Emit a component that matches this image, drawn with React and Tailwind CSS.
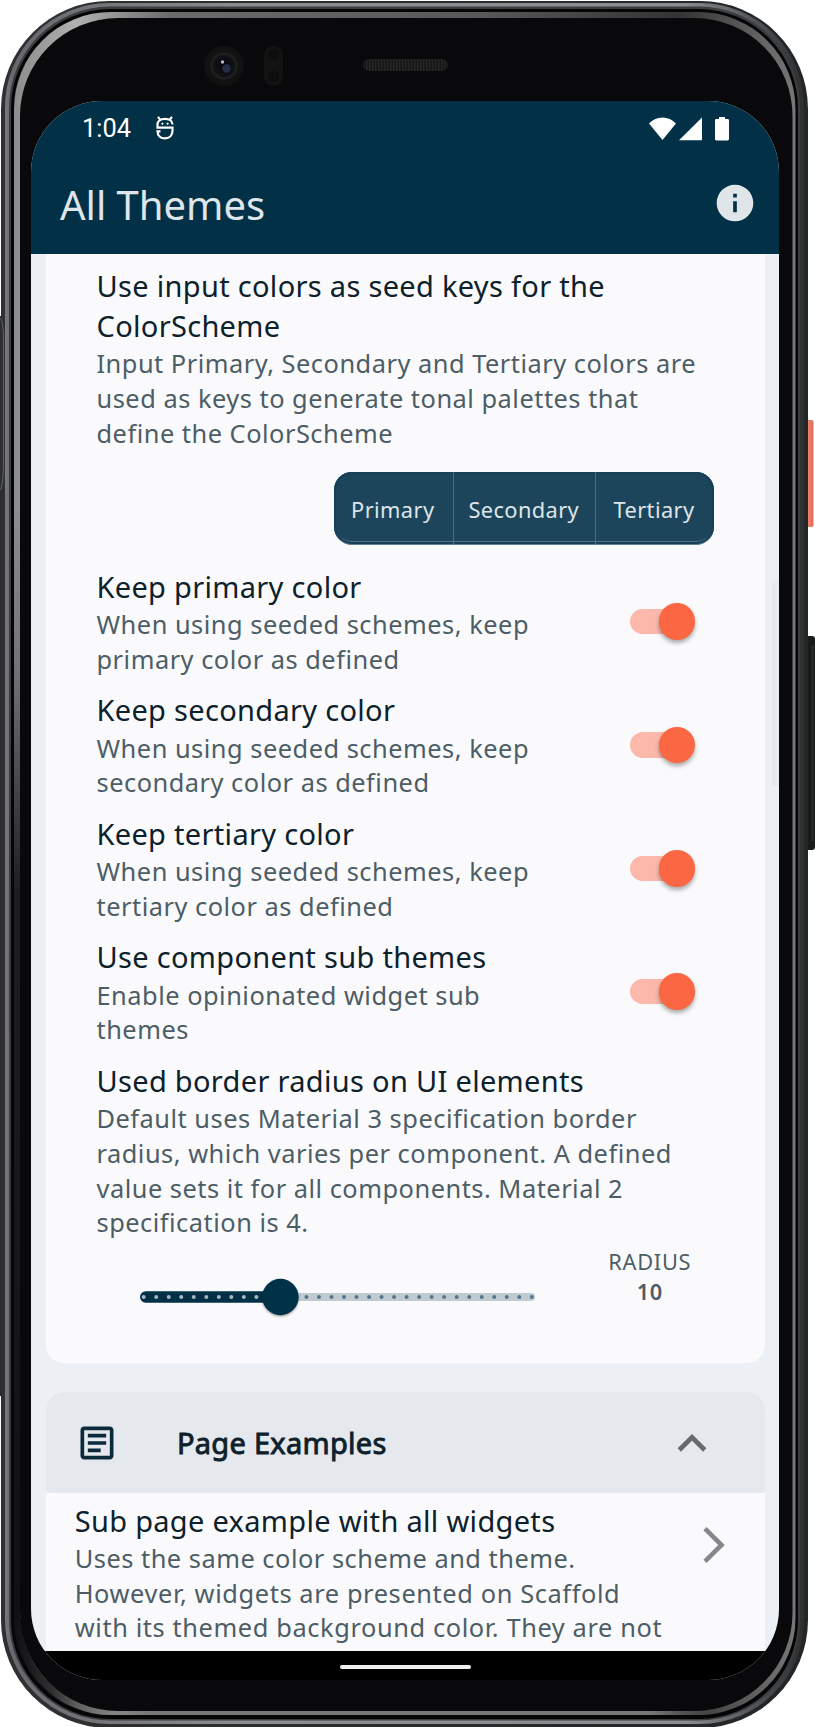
import { MdInfo, MdOutlineArticle } from "react-icons/md";

const titleCls = "text-[29px] leading-[39.6px] tracking-[0.31px] text-[#0d212b] whitespace-nowrap";
const subCls = "text-[25.4px] leading-[34.65px] text-[#4d5d66] whitespace-nowrap relative top-[0.9px]";

const switches = [
  { title: "Keep primary color", lines: ["When using seeded schemes, keep", "primary color as defined"] },
  { title: "Keep secondary color", lines: ["When using seeded schemes, keep", "secondary color as defined"] },
  { title: "Keep tertiary color", lines: ["When using seeded schemes, keep", "tertiary color as defined"] },
  { title: "Use component sub themes", lines: ["Enable opinionated widget sub", "themes"] },
];

function Lines({ lines, tracking = "tracking-[0.5px]" }) {
  return lines.map((l) => (
    <div key={l} className={`${subCls} ${tracking}`}>{l}</div>
  ));
}

function Switch() {
  return (
    <div className="mr-[68.6px] flex h-[36.5px] w-[66px] items-center rounded-full">
      <div className="flex h-[25.5px] w-[60px] items-center rounded-full bg-[#fbb8ab]">
        <div className="ml-[29px] h-[36.5px] w-[36.5px] shrink-0 rounded-full bg-[#fa6742] shadow-[0_3px_4px_rgba(0,0,0,0.32)]" />
      </div>
    </div>
  );
}

function Slider() {
  const ticks = Array.from({ length: 32 }, (_, i) => i);
  return (
    <svg width="396" height="44" viewBox="0 0 396 44" className="ml-[94.3px] block">
      <defs>
        <filter id="thumbShadow" x="-30%" y="-30%" width="160%" height="170%">
          <feDropShadow dx="0" dy="1.2" stdDeviation="1.2" floodOpacity="0.4" />
        </filter>
      </defs>
      <rect x="130" y="18" width="265" height="8" rx="4" fill="#c0cad1" />
      <rect x="0" y="16.3" width="140" height="11.4" rx="5.7" fill="#023047" />
      {ticks.map((i) => (
        <circle key={i} cx={3.7 + i * 12.52} cy="22" r="2" fill={i < 11 ? "#a9b7bf" : "#55768a"} />
      ))}
      <circle cx="140.4" cy="22" r="18.2" fill="#023047" filter="url(#thumbShadow)" />
    </svg>
  );
}

function PhoneBody() {
  return (
    <svg width="815" height="1727" viewBox="0 0 815 1727" className="absolute inset-0">
      <defs>
        <linearGradient id="outer" x1="0" x2="1" y1="0" y2="0">
          <stop offset="0" stopColor="#303030" /><stop offset="1" stopColor="#242526" />
        </linearGradient>
        <linearGradient id="rim" x1="0" x2="1" y1="0" y2="0">
          <stop offset="0" stopColor="#77797d" /><stop offset="0.01" stopColor="#66686d" />
          <stop offset="0.3" stopColor="#8b8e91" /><stop offset="0.85" stopColor="#8b8e91" /><stop offset="0.95" stopColor="#4a4d50" /><stop offset="1" stopColor="#2c2f30" />
        </linearGradient>
        <linearGradient id="bevel" x1="0" x2="1" y1="0" y2="0">
          <stop offset="0" stopColor="#8c8c8c" /><stop offset="0.08" stopColor="#b0b0b0" />
          <stop offset="0.2" stopColor="#6b6b6b" /><stop offset="0.6" stopColor="#585858" />
          <stop offset="0.85" stopColor="#333333" /><stop offset="1" stopColor="#777777" />
        </linearGradient>
        <linearGradient id="bevelFade" x1="0" x2="0" y1="0" y2="1">
          <stop offset="0" stopColor="#0a0a0c" stopOpacity="0" /><stop offset="0.15" stopColor="#0a0a0c" stopOpacity="0.2" />
          <stop offset="0.35" stopColor="#0a0a0c" stopOpacity="0.85" /><stop offset="1" stopColor="#0a0a0c" stopOpacity="0.95" />
        </linearGradient>
        <linearGradient id="cornerFade" gradientUnits="userSpaceOnUse" x1="14" x2="125" y1="0" y2="0">
          <stop offset="0" stopColor="#0a0a0c" stopOpacity="0.95" /><stop offset="0.35" stopColor="#0a0a0c" stopOpacity="0.75" />
          <stop offset="1" stopColor="#0a0a0c" stopOpacity="0" />
        </linearGradient>
        <linearGradient id="bottomEdge" x1="0" x2="1" y1="0" y2="0">
          <stop offset="0" stopColor="#777777" stopOpacity="0" /><stop offset="0.1" stopColor="#777777" />
          <stop offset="0.9" stopColor="#777777" /><stop offset="1" stopColor="#777777" stopOpacity="0" />
        </linearGradient>
        <linearGradient id="power" x1="0" x2="1" y1="0" y2="0">
          <stop offset="0" stopColor="#b5452f" /><stop offset="0.4" stopColor="#f08068" /><stop offset="1" stopColor="#d96d58" />
        </linearGradient>
        <radialGradient id="lens">
          <stop offset="0" stopColor="#07070a" /><stop offset="0.5" stopColor="#101016" />
          <stop offset="0.62" stopColor="#222222" /><stop offset="0.7" stopColor="#131313" /><stop offset="1" stopColor="#101010" />
        </radialGradient>
        <pattern id="mesh" width="3" height="3" patternUnits="userSpaceOnUse">
          <rect width="3" height="3" fill="#151515" /><rect width="1.4" height="3" fill="#272727" />
        </pattern>
      </defs>
      <rect x="805" y="420" width="8.5" height="107" rx="2" fill="url(#power)" />
      <rect x="805" y="636" width="10" height="214" rx="3" fill="#1a1a1a" />
      <rect x="811.5" y="645" width="2" height="196" fill="#2c2c2c" />
      <rect x="1" y="1" width="807" height="1727" rx="108" fill="url(#outer)" />
      <rect x="0" y="316" width="2" height="1080" fill="#2c2d2d" />
      <rect x="5" y="3" width="799" height="1721" rx="104" fill="url(#rim)" />
      <rect x="9" y="6.5" width="791" height="1714" rx="101" fill="#3c3d40" />
      <rect x="11" y="9" width="787" height="1710" rx="99" fill="#050505" />
      <rect x="14" y="12" width="781.5" height="1703" rx="97" fill="url(#bevel)" />
      <rect x="14" y="500" width="6" height="1118" fill="url(#bevelFade)" />
      <path d="M17 1618 A97 95 0 0 0 114 1713 H126" fill="none" stroke="url(#cornerFade)" strokeWidth="9" />
      <rect x="100" y="1710.500" width="610" height="4.500" fill="url(#bottomEdge)" />
      <rect x="20" y="18" width="772.5" height="1693" rx="98" fill="#09090b" />
      <path d="M0.500 318 Q3.500 324 3.500 340 V462 Q3.500 482 0.500 490" fill="none" stroke="#5a6262" strokeWidth="1" />
      <circle cx="224" cy="66" r="20" fill="url(#lens)" />
      <circle cx="226.5" cy="68.5" r="4.2" fill="#38456e" opacity="0.6" />
      <circle cx="222.5" cy="62" r="1.7" fill="#b9b9b9" />
      <rect x="264" y="46" width="19" height="40" rx="9.5" fill="#131313" />
      <circle cx="273.5" cy="54.5" r="6.5" fill="#0d0d0e" stroke="#161616" />
      <circle cx="273.5" cy="76.5" r="6.5" fill="#0d0d0e" stroke="#161616" />
      <rect x="363.5" y="59.5" width="84" height="11" rx="5.5" fill="url(#mesh)" stroke="#1e1e1e" />
    </svg>
  );
}

function StatusBar() {
  return (
    <div className="flex h-[54px] items-center justify-between pl-[51px] pr-[50.500px]">
      <div className="flex items-center">
        <span className="font-['Roboto'] text-[25.4px] leading-[30px] text-white">1:04</span>
        <svg width="18" height="24" viewBox="0 0 18 24" className="ml-[25.300px]" fill="none" stroke="white" strokeWidth="2.200">
          <path d="M2 0.800 L4 3.400 M16 0.800 L14 3.400" />
          <path d="M16.500 8.500 C16.500 4.500 13 2.800 9 2.800 C4.500 2.800 1.500 5 1.500 8.500 V11.600 H16.500 V14.500 C16.500 19.500 13.500 22.400 9 22.400 C4.500 22.400 1.500 19.500 1.500 15.300 H4.500" />
          <circle cx="6.400" cy="7.700" r="0.700" fill="white" strokeWidth="0.900" />
          <circle cx="11.600" cy="7.700" r="0.700" fill="white" strokeWidth="0.900" />
        </svg>
      </div>
      <svg width="81" height="25" viewBox="0 0 81 25" fill="white">
        <path d="M1 7.500 C8 -0.500 21 -0.500 28 7.500 L14.500 24 Z" />
        <path d="M54 1.500 V24.200 H31 Z" />
        <path d="M71 1 h6 v2 h2.600 q1.400 0 1.400 1.400 v18.700 q0 1.400 -1.400 1.400 h-11.200 q-1.400 0 -1.400 -1.400 v-18.700 q0 -1.400 1.400 -1.400 h2.600 z" />
      </svg>
    </div>
  );
}

export default function App() {
  return (
    <div className="relative h-[1727px] w-[815px] overflow-hidden bg-white pt-[101px] pl-[31px] font-['Noto_Sans',sans-serif]">
      <PhoneBody />
      <div className="relative flex h-[1578.5px] w-[748px] flex-col overflow-hidden rounded-[71px] bg-[#ecf0f5]">
        <header className="h-[153px] shrink-0 bg-[#023047]">
          <StatusBar />
          <div className="flex h-[99px] items-center justify-between pl-[29px] pr-[22px]">
            <h1 className="text-[40px] leading-[54px] text-[#dfe5e8]">All Themes</h1>
            <MdInfo size={44} className="-mt-[3px] text-[#dfe5e8]" />
          </div>
        </header>

        <main className="relative h-[1396.700px] shrink-0 overflow-hidden px-[14.500px]">
          <div className="absolute top-[326px] right-0 h-[206px] w-[7px] bg-[#e6e9ee]" />
          <section className="h-[1108.500px] rounded-b-[18px] bg-[#fafafd] pt-[11.500px] pl-[51px]">
            <div className="text-[29px] leading-[40px] tracking-[0.310px] text-[#0d212b]">
              <div>Use input colors as seed keys for the</div>
              <div>ColorScheme</div>
            </div>
            <Lines lines={["Input Primary, Secondary and Tertiary colors are", "used as keys to generate tonal palettes that", "define the ColorScheme"]} />
            <div className="mt-[22.200px] ml-[237.500px] flex h-[73px] w-[380px] overflow-hidden rounded-[18px] border-b border-[#5d7f92] bg-[#1c455b] text-[21.800px] leading-[30px] tracking-[0.400px] text-[#dfe5e8] shadow-[inset_0_0_0_2px_#164058,inset_0_-3px_0_#527386]">
              <div className="flex w-[120px] items-center justify-center border-r border-[#4b6d80] pt-[4.500px] pr-[1.500px]">Primary</div>
              <div className="flex w-[142px] items-center justify-center border-r border-[#4b6d80] pt-[4.500px] pr-[1.500px]">Secondary</div>
              <div className="flex w-[118px] items-center justify-center pt-[4.500px] pr-[2px]">Tertiary</div>
            </div>
            <div className="mt-[22.200px] flex flex-col gap-[14.600px]">
              {switches.map((s) => (
                <div key={s.title} className="flex h-[108.900px] items-center justify-between">
                  <div>
                    <div className={titleCls}>{s.title}</div>
                    <Lines lines={s.lines} />
                  </div>
                  <Switch />
                </div>
              ))}
              <div>
                <div className={titleCls}>Used border radius on UI elements</div>
                <Lines lines={["Default uses Material 3 specification border", "radius, which varies per component. A defined", "value sets it for all components. Material 2", "specification is 4."]} />
              </div>
            </div>
            <div className="-ml-[51px] flex h-[116px] items-center">
              <Slider />
              <div className="-mt-[40px] ml-[62px] flex w-[104px] flex-col items-center text-[21.800px] leading-[29.700px] text-[#4d5d66]">
                <span className="tracking-[0.700px]">RADIUS</span>
                <span className="font-semibold tracking-[0.700px]">10</span>
              </div>
            </div>
          </section>

          <section className="mt-[29.500px] h-[330px] rounded-t-[18px] bg-[#fafafd]">
            <div className="flex h-[101px] items-center rounded-t-[18px] rounded-b-[3px] bg-[#e5e8ed] pl-[29px]">
              <MdOutlineArticle size={44} className="text-[#0b2a3a]" />
              <div className="ml-[58.500px] grow text-[29px] leading-[40px] tracking-[0.280px] text-[#0d212b] [-webkit-text-stroke:0.900px_#0d212b]">Page Examples</div>
              <svg width="30" height="20" viewBox="0 0 30 20" className="mr-[58px]" fill="none" stroke="#68696b" strokeWidth="4.600">
                <path d="M2.300 17 L15 4.300 L27.700 17" />
              </svg>
            </div>
            <div className="flex justify-between pt-[7.500px] pl-[29.200px]">
              <div>
                <div className={titleCls}>Sub page example with all widgets</div>
                <Lines lines={["Uses the same color scheme and theme."]} />
                <Lines lines={["However, widgets are presented on Scaffold", "with its themed background color. They are not"]} tracking="tracking-[0.600px]" />
              </div>
              <svg width="24" height="38" viewBox="0 0 24 38" className="mt-[25px] mr-[39px] shrink-0" fill="none" stroke="#878789" strokeWidth="4.600">
                <path d="M3 2.700 L19.500 19 L3 35.300" />
              </svg>
            </div>
          </section>
        </main>

        <nav className="flex grow justify-center bg-black pt-[14px]">
          <div className="h-[4px] w-[131px] rounded-full bg-[#eef0ee]" />
        </nav>
      </div>
    </div>
  );
}
